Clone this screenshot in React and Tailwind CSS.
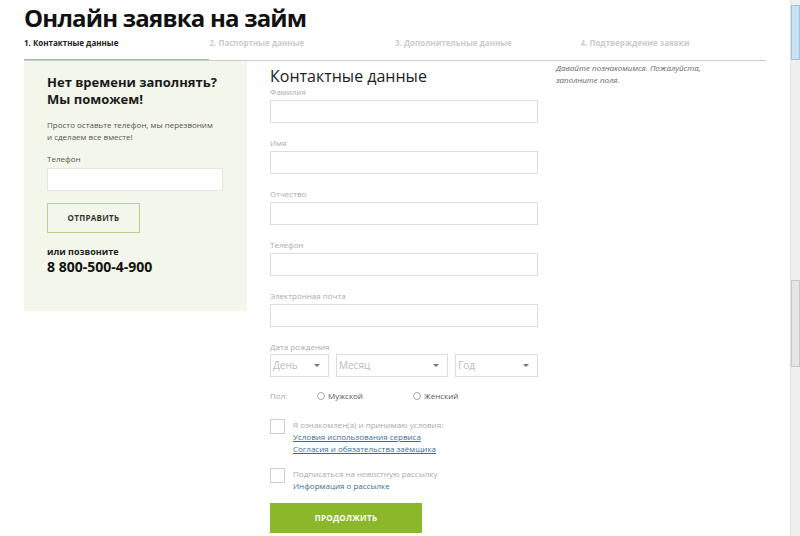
import React from 'react';

const Field = ({ label }) => (
  <div className="mb-[14px]">
    <div className="text-[8px] leading-[12px] text-[#aaa]">{label}</div>
    <div className="mt-[2px] h-[23px] border border-[#ddd] bg-white" />
  </div>
);

const Select = ({ label, className }) => (
  <div className={`h-[23px] border border-[#ddd] bg-white flex items-center justify-between pl-[2px] pr-[8px] ${className}`}>
    <span className="text-[10px] text-[#bbb]">{label}</span>
    <span className="w-0 h-0 border-l-[3px] border-r-[3px] border-t-[3px] border-l-transparent border-r-transparent border-t-[#777]" />
  </div>
);

const Radio = ({ label }) => (
  <div className="flex items-center gap-[3px]">
    <span className="w-[8px] h-[8px] rounded-full border border-[#aaa] bg-white" />
    <span className="text-[8px] text-[#555]">{label}</span>
  </div>
);

const steps = ['1. Контактные данные', '2. Паспортные данные', '3. Дополнительные данные', '4. Подтверждение заявки'];

export default function App() {
  return (
    <div className="w-[800px] h-[536px] overflow-hidden bg-white flex" style={{ fontFamily: '"Open Sans", sans-serif' }}>
      <div className="flex-1 pl-[24px]">
        <h1 className="mt-[2px] text-[24px] leading-[32px] font-bold text-[#111] tracking-[-0.8px]">Онлайн заявка на займ</h1>

        <div className="w-[742px] mt-[3px]">
          <div className="grid grid-cols-4 pb-[10px]">
            {steps.map((s, i) => (
              <div key={s} className={`text-[8px] leading-[12px] font-bold ${i === 0 ? 'text-[#222]' : 'text-[#ccc]'}`}>{s}</div>
            ))}
          </div>
          <div className="h-[2px] flex border-b border-[#ccc]">
            <div className="w-[185px] bg-[#a5cc5a]" />
          </div>
        </div>

        <div className="flex">
          <div className="w-[223px] h-[250px] bg-[#f3f6ea] pl-[23px] pr-[24px] pt-[13px]">
            <div className="text-[13px] leading-[17px] font-bold text-[#1a1a1a]">Нет времени заполнять?<br />Мы поможем!</div>
            <div className="mt-[11px] text-[8px] leading-[12px] text-[#555]">Просто оставьте телефон, мы перезвоним<br />и сделаем все вместе!</div>
            <div className="mt-[10px] text-[8px] leading-[12px] text-[#555]">Телефон</div>
            <div className="mt-[3px] h-[23px] border border-[#e3e6dc] bg-white" />
            <button className="mt-[12px] w-[93px] h-[30px] border border-[#b9cf8c] text-[8px] font-bold text-[#333] tracking-[0.3px]">ОТПРАВИТЬ</button>
            <div className="mt-[13px] text-[9px] leading-[12px] font-bold text-[#222]">или позвоните</div>
            <div className="text-[14px] leading-[18px] font-bold text-[#111]">8 800-500-4-900</div>
          </div>

          <div className="w-[268px] ml-[23px] pt-[5px]">
            <div className="text-[16px] leading-[20px] text-[#222]">Контактные данные</div>
            <Field label="Фамилия" />
            <Field label="Имя" />
            <Field label="Отчество" />
            <Field label="Телефон" />
            <Field label="Электронная почта" />
            <div>
              <div className="text-[8px] leading-[12px] text-[#aaa]">Дата рождения</div>
              <div className="mt-[1px] flex gap-[7px]">
                <Select label="День" className="w-[59px]" />
                <Select label="Месяц" className="w-[112px]" />
                <Select label="Год" className="flex-1" />
              </div>
            </div>
            <div className="mt-[13px] flex items-center h-[12px]">
              <span className="w-[47px] text-[8px] text-[#aaa]">Пол:</span>
              <div className="w-[96px]"><Radio label="Мужской" /></div>
              <Radio label="Женский" />
            </div>
            <div className="mt-[17px] flex gap-[8px]">
              <span className="w-[15px] h-[15px] border border-[#ccc] bg-white shrink-0" />
              <div className="text-[8px] leading-[12px]">
                <div className="text-[#aaa]">Я ознакомлен(а) и принимаю условия:</div>
                <div className="text-[#3b6d96] underline">Условия использования сервиса</div>
                <div className="text-[#3b6d96] underline">Согласия и обязательства заёмщика</div>
              </div>
            </div>
            <div className="mt-[13px] flex gap-[8px]">
              <span className="w-[15px] h-[15px] border border-[#ccc] bg-white shrink-0" />
              <div className="text-[8px] leading-[12px]">
                <div className="text-[#aaa]">Подписаться на новостную рассылку</div>
                <div className="text-[#3b6d96]">Информация о рассылке</div>
              </div>
            </div>
            <button className="mt-[11px] w-[152px] h-[30px] bg-[#8ab82a] text-white text-[8px] font-bold tracking-[0.3px]">ПРОДОЛЖИТЬ</button>
          </div>

          <div className="ml-[18px] pt-[1px] text-[8px] leading-[12px] italic text-[#666]">
            Давайте познакомимся. Пожалуйста,<br />заполните поля.
          </div>
        </div>
      </div>

      <div className="w-[10px] h-full bg-[#f0f0f0] border-l border-[#e2e2e2] flex flex-col">
        <div className="mt-[5px] h-[55px] bg-[#c9e3f3] border border-[#9cc4de]" />
        <div className="mt-[220px] h-[87px] bg-[#e6e6e6] border border-[#c8c8c8]" />
      </div>
    </div>
  );
}
